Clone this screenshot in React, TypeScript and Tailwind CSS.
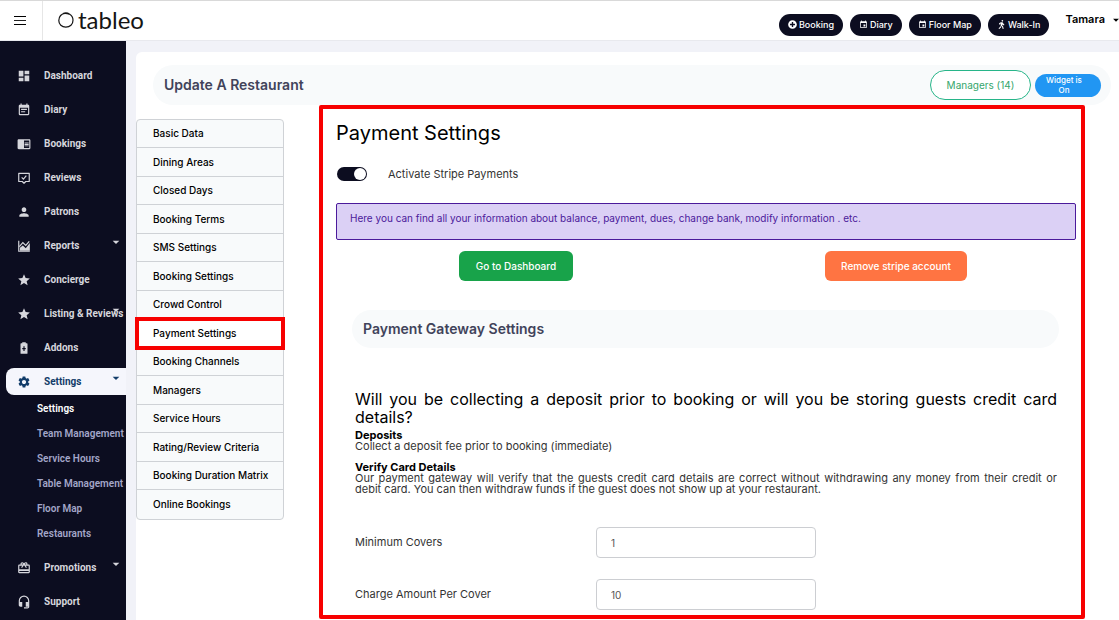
import type { ReactNode } from 'react';
import { FaPlusCircle, FaWalking } from 'react-icons/fa';
import {
    MdArrowDropDown,
    MdCardGiftcard,
    MdChromeReaderMode,
    MdDashboard,
    MdEvent,
    MdEventNote,
    MdHeadsetMic,
    MdPerson,
    MdSettings,
    MdStar,
} from 'react-icons/md';

function ReviewIcon() {
    return (
        <svg viewBox="0 0 24 24" fill="none" stroke="currentColor" strokeWidth="2">
            <path d="M3 4h18v14h-6l-3 3-3-3H3z" strokeLinejoin="round" />
            <path d="M8 11l3 3 5-6" />
        </svg>
    );
}

function ReportIcon() {
    return (
        <svg viewBox="0 0 24 24" fill="currentColor">
            <path d="M2 3h2v17h18v2H2z" />
            <path d="M5 20v-5l5-4 5 5 7-9v13z" />
            <path d="M4 13l6-7 5 5 6-7" fill="none" stroke="currentColor" strokeWidth="2" />
        </svg>
    );
}

function AddonIcon() {
    return (
        <svg viewBox="0 0 24 24" fill="currentColor" fillRule="evenodd">
            <path d="M9 2h6v2h2a1 1 0 0 1 1 1v16a1 1 0 0 1-1 1H7a1 1 0 0 1-1-1V5a1 1 0 0 1 1-1h2zM11 9v3H9v2h2v3h2v-3h2v-2h-2V9z" />
        </svg>
    );
}

interface NavItem {
    label: string;
    icon: ReactNode;
    expandable?: boolean;
    active?: boolean;
}

const mainNav: NavItem[] = [
    { label: 'Dashboard', icon: <MdDashboard /> },
    { label: 'Diary', icon: <MdEventNote /> },
    { label: 'Bookings', icon: <MdChromeReaderMode /> },
    { label: 'Reviews', icon: <ReviewIcon /> },
    { label: 'Patrons', icon: <MdPerson /> },
    { label: 'Reports', icon: <ReportIcon />, expandable: true },
    { label: 'Concierge', icon: <MdStar /> },
    { label: 'Listing & Reviews', icon: <MdStar />, expandable: true },
    { label: 'Addons', icon: <AddonIcon /> },
    { label: 'Settings', icon: <MdSettings />, expandable: true, active: true },
];

const settingsNav = [
    'Settings',
    'Team Management',
    'Service Hours',
    'Table Management',
    'Floor Map',
    'Restaurants',
];

const bottomNav: NavItem[] = [
    { label: 'Promotions', icon: <MdCardGiftcard />, expandable: true },
    { label: 'Support', icon: <MdHeadsetMic /> },
];

const tabs = [
    'Basic Data',
    'Dining Areas',
    'Closed Days',
    'Booking Terms',
    'SMS Settings',
    'Booking Settings',
    'Crowd Control',
    'Payment Settings',
    'Booking Channels',
    'Managers',
    'Service Hours',
    'Rating/Review Criteria',
    'Booking Duration Matrix',
    'Online Bookings',
];

const quickActions = [
    { label: 'Booking', icon: <FaPlusCircle /> },
    { label: 'Diary', icon: <MdEvent /> },
    { label: 'Floor Map', icon: <MdEvent /> },
    { label: 'Walk-In', icon: <FaWalking /> },
];

function NavList({ items }: { items: NavItem[] }) {
    return (
        <ul className="flex flex-col gap-[7px] pl-1.5">
            {items.map((item) => (
                <li key={item.label}>
                    <a
                        href="#"
                        className={`relative flex h-[27px] items-center gap-[13px] rounded-l-lg pl-[11px] whitespace-nowrap ${
                            item.active ? 'bg-[#f5f6fc] text-[#123c69]' : 'text-[#d6d6dc]'
                        }`}
                    >
                        <span className="size-3.5 [&>svg]:size-full">{item.icon}</span>
                        {item.label}
                        {item.expandable && (
                            <MdArrowDropDown className="absolute top-0.5 right-0.5 size-4" />
                        )}
                    </a>
                </li>
            ))}
        </ul>
    );
}

function Sidebar() {
    return (
        <nav className="w-[126px] shrink-0 bg-[#0c0d20] pt-[21px] font-['Roboto',sans-serif] text-[10px] font-bold">
            <NavList items={mainNav} />
            <ul className="mt-px mb-2 flex flex-col pl-[37px] font-semibold text-[#a3a6c8]">
                {settingsNav.map((label) => (
                    <li key={label}>
                        <a
                            href="#"
                            className={`flex h-[25px] items-center whitespace-nowrap ${
                                label === 'Settings' ? 'text-white' : ''
                            }`}
                        >
                            {label}
                        </a>
                    </li>
                ))}
            </ul>
            <NavList items={bottomNav} />
        </nav>
    );
}

function TopBar() {
    return (
        <header className="flex h-[41px] items-center border-t border-b border-t-[#d9d9d9] border-b-[#e8e9ee] bg-white">
            <button
                type="button"
                aria-label="Toggle menu"
                className="flex h-full w-[43px] items-center justify-center border-r border-[#e6e6e6] pr-0.5"
            >
                <svg viewBox="0 0 12 9" className="h-[9px] w-3">
                    <path d="M0 0h12v1H0zM0 8h12v1H0z" fill="#000" />
                    <path d="M0 4h12v1H0z" fill="#222" />
                </svg>
            </button>
            <a
                href="#"
                className="ml-[15px] flex items-center gap-1 pb-0.5 font-['Lato',sans-serif] text-2xl text-[#151515]"
            >
                <svg
                    viewBox="0 0 16 16"
                    className="size-4"
                    fill="none"
                    stroke="currentColor"
                    strokeWidth="1.2"
                >
                    <path d="M5 1.600C9.500-.4 15 3 15 8.200c0 4.200-3 7-7.200 7C3.800 15.200.8 12.300.8 8.500.8 4.500 3.500 1.500 7 1.500c1.600 0 3 .2 4.200.8" />
                </svg>
                tableo
            </a>
            <div className="ml-auto flex items-center gap-[7px] pt-2">
                {quickActions.map((action) => (
                    <button
                        key={action.label}
                        type="button"
                        className="flex h-[22px] items-center gap-0.5 rounded-full bg-[#0c0d20] px-[9px] text-[9px] font-medium whitespace-nowrap text-white"
                    >
                        {action.icon}
                        {action.label}
                    </button>
                ))}
            </div>
            <button
                type="button"
                className="-mr-1 ml-4 flex items-center pb-0.5 text-[11px] font-semibold text-black"
            >
                Tamara
                <MdArrowDropDown className="ml-1 size-3.5" />
            </button>
        </header>
    );
}

function TabList() {
    return (
        <ul className="mt-3.5 w-[148px] shrink-0 self-start rounded-sm border border-[#cfd2d6] bg-[#f8fafb] text-[10px] font-medium text-black">
            {tabs.map((tab) => {
                const current = tab === 'Payment Settings';
                return (
                    <li
                        key={tab}
                        className={`h-7 border-b border-[#cfd2d6] last:border-b-0 even:h-[29px] ${
                            current
                                ? 'relative bg-white outline-4 -outline-offset-2 outline-[#f70000]'
                                : ''
                        }`}
                    >
                        <a href="#" className="flex h-full items-center pl-4">
                            {tab}
                        </a>
                    </li>
                );
            })}
        </ul>
    );
}

interface FieldProps {
    id: string;
    label: string;
    value: string;
}

function Field({ id, label, value }: FieldProps) {
    return (
        <div className="flex items-center">
            <label htmlFor={id} className="w-[241px] shrink-0 text-[11px] text-[#333]">
                {label}
            </label>
            <input
                id={id}
                defaultValue={value}
                className="h-[31px] w-[220px] rounded border border-[#ccced2] bg-white px-3.5 text-[10px] text-[#555]"
            />
        </div>
    );
}

function PaymentPanel() {
    return (
        <section className="mr-[34px] ml-[35px] min-w-0 flex-1 rounded-xs border-4 border-[#f70000] bg-white pr-[5px] pb-[5px] pl-[13px]">
            <h2 className="mt-2 text-[20px] leading-8 text-black">Payment Settings</h2>

            <label className="mt-[15px] ml-px flex h-5 items-center gap-[21px] text-[11px] text-[#333]">
                <input
                    type="checkbox"
                    role="switch"
                    defaultChecked
                    className="relative h-3.5 w-[30px] appearance-none rounded-full bg-[#0c0d20] after:absolute after:top-px after:right-px after:size-3 after:rounded-full after:bg-white"
                />
                Activate Stripe Payments
            </label>

            <p className="mt-[19px] min-h-[37px] rounded-xs border border-[#4b1a9b] bg-[#dbd0f5] px-[13px] pt-[7px] text-[10px] leading-[15px] text-[#4b1a9b]">
                Here you can find all your information about balance, payment, dues, change bank,
                modify information . etc.
            </p>

            <div className="-mx-2.5 mt-[11px] grid grid-cols-2 justify-items-center text-[10px] font-medium text-white">
                <button type="button" className="h-[30px] w-[114px] rounded-md bg-[#18a34a]">
                    Go to Dashboard
                </button>
                <button type="button" className="h-[30px] w-[142px] rounded-md bg-[#ff7442]">
                    Remove stripe account
                </button>
            </div>

            <div className="mr-[17px] ml-4">
                <h3 className="mt-[29px] flex h-[38px] items-center rounded-full bg-[#f8fafb] px-[11px] text-sm font-semibold text-[#41435a]">
                    Payment Gateway Settings
                </h3>

                <div className="mr-0.5 ml-[3px]">
                    <h4 className="mt-[42px] text-justify text-base leading-[18px] text-black">
                        Will you be collecting a deposit prior to booking or will you be storing
                        guests credit card details?
                    </h4>
                    <div className="mt-1 text-[11px] leading-[11px] text-[#333]">
                        <h5 className="font-bold text-black">Deposits</h5>
                        <p>Collect a deposit fee prior to booking (immediate)</p>
                        <h5 className="mt-2.5 font-bold text-black">Verify Card Details</h5>
                        <p className="text-justify">
                            Our payment gateway will verify that the guests credit card details are
                            correct without withdrawing any money from their credit or
                            debit&nbsp;card. You can then withdraw funds if the guest does not show
                            up at your restaurant.
                        </p>
                    </div>
                    <div className="mt-8 flex flex-col gap-[21px]">
                        <Field id="minimum-covers" label="Minimum Covers" value="1" />
                        <Field id="charge-amount" label="Charge Amount Per Cover" value="10" />
                    </div>
                </div>
            </div>
        </section>
    );
}

export default function App() {
    return (
        <div className="flex min-h-screen flex-col overflow-x-hidden bg-[#f1f2f8] font-['Inter',sans-serif]">
            <TopBar />
            <div className="flex flex-1">
                <Sidebar />
                <main className="mt-[11px] ml-2.5 min-w-0 flex-1 rounded-tl-md bg-white">
                    <div className="mt-[13px] mr-2 ml-[17px] flex h-10 items-center rounded-full bg-[#f8fafb] pr-2.5 pl-[11px]">
                        <h1 className="text-sm font-semibold text-[#41435a]">
                            Update A Restaurant
                        </h1>
                        <button
                            type="button"
                            className="ml-auto h-[30px] w-[101px] rounded-full border border-[#27b589] bg-white text-[10px] text-[#35a66c]"
                        >
                            Managers (14)
                        </button>
                        <button
                            type="button"
                            className="ml-1 h-[23px] w-[66px] rounded-full bg-[#2196f3] pr-4 pl-2 text-[8px] leading-2.5 font-medium text-white"
                        >
                            Widget is On
                        </button>
                    </div>
                    <div className="flex">
                        <TabList />
                        <PaymentPanel />
                    </div>
                </main>
            </div>
        </div>
    );
}
